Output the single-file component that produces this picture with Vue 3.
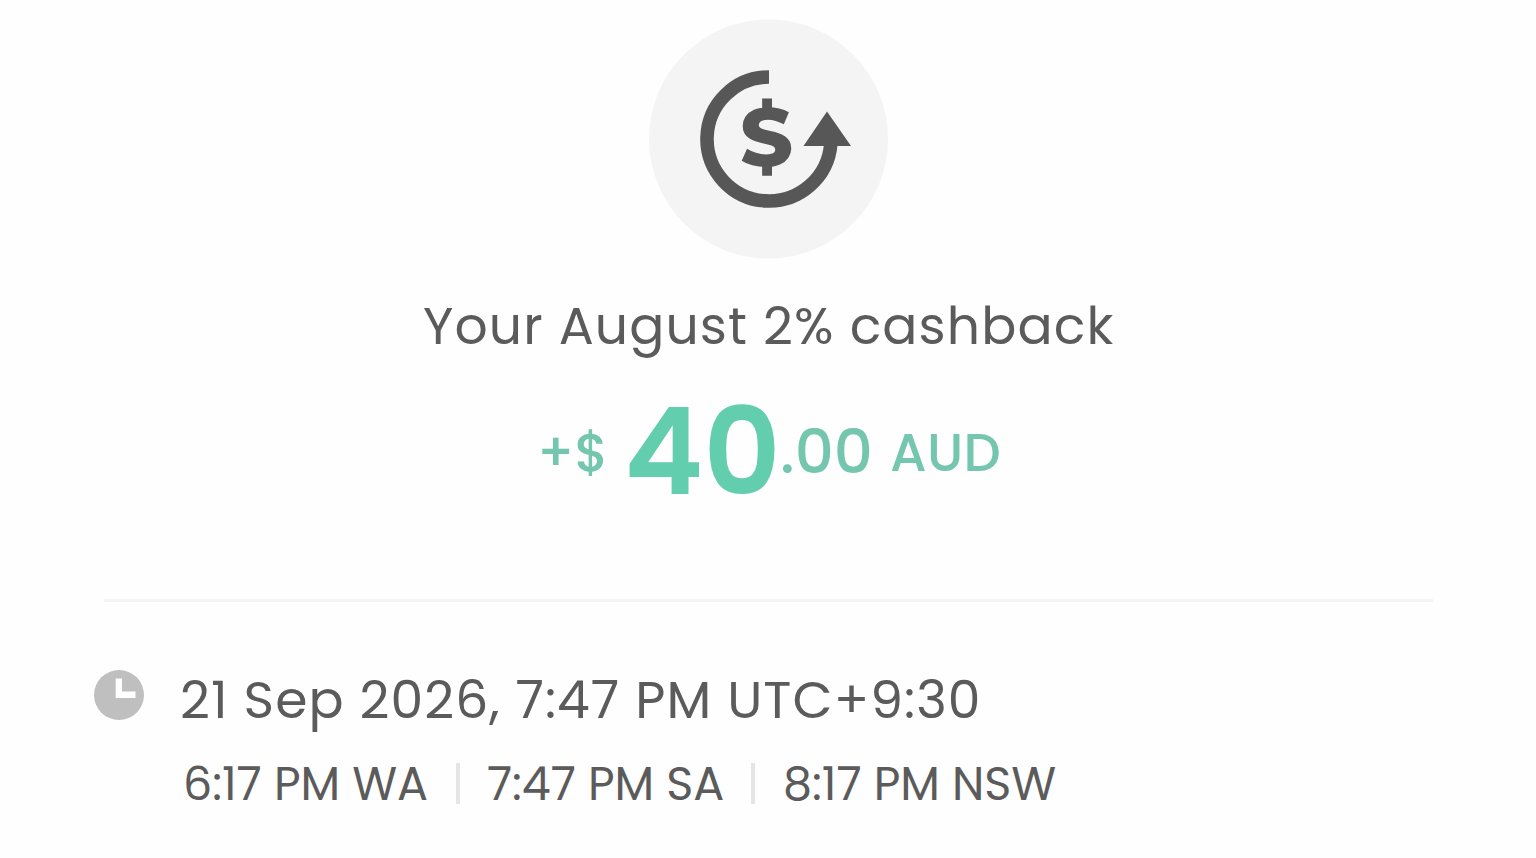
<template>
  <main class="receipt">
    <div class="receipt-icon">
      <svg viewBox="0 0 240 240" width="240" height="240">
        <circle cx="119.500" cy="120" r="119.500" fill="#f4f4f4" />
        <path d="M120 58A62 62 0 1 0 181.800 125" fill="none" stroke="#575757" stroke-width="13.600" />
        <path d="M178 92.500L202 127H154.500Z" fill="#575757" />
        <text class="icon-currency" x="117.500" y="147" text-anchor="middle">$</text>
      </svg>
    </div>

    <h1 class="receipt-title">Your August 2% cashback</h1>

    <div class="amount">
      <span class="amount-sign">+$</span>
      <span class="amount-whole">40</span>
      <span class="amount-cents">.00</span>
      <span class="amount-currency">AUD</span>
    </div>

    <hr class="divider" />

    <section class="time">
      <svg class="time-icon" viewBox="0 0 50 50" width="50" height="50">
        <circle cx="25" cy="25" r="25" fill="#bfbfbf" />
        <path d="M21.700 8.500h6.300v13h13.500v6.500h-19.800z" fill="#fff" />
      </svg>
      <div class="time-body">
        <div class="time-main">21 Sep 2026, 7:47 PM UTC+9:30</div>
        <div class="zones">
          <span v-for="zone in zones" :key="zone.name" class="zone" :class="zone.name">
            {{ zone.time }} {{ zone.label }}
          </span>
        </div>
      </div>
    </section>
  </main>
</template>

<script setup>
const zones = [
  { name: 'wa', time: '6:17 PM', label: 'WA' },
  { name: 'sa', time: '7:47 PM', label: 'SA' },
  { name: 'nsw', time: '8:17 PM', label: 'NSW' },
]
</script>

<style>
body {
  margin: 0;
  background: #fefefe;
}
</style>

<style scoped>
.receipt {
  box-sizing: border-box;
  width: 1536px;
  height: 858px;
  padding-top: 19px;
  overflow: hidden;
  font-family: Poppins, Inter, 'Liberation Sans', sans-serif;
  color: #5b5b5b;
  white-space: nowrap;
}

.receipt-icon {
  display: flex;
  justify-content: center;
  height: 240px;
  padding-left: 1px;
}

.icon-currency {
  font-family: Montserrat, 'Open Sans', sans-serif;
  font-size: 82px;
  font-weight: 800;
  fill: #575757;
}

.receipt-title {
  margin: 37px 0 0 423px;
  font-size: 52px;
  font-weight: 400;
  line-height: 60px;
  height: 60px;
  letter-spacing: 1.1px;
}

.amount {
  display: flex;
  align-items: flex-start;
  height: 140px;
  margin: 26px 0 0 537px;
  color: #74c6ae;
  font-weight: 500;
}

.amount-sign {
  width: 87px;
  padding-top: 41px;
  font-size: 52.5px;
  line-height: 60px;
}

.amount-whole {
  width: 156px;
  font-size: 120px;
  font-weight: 600;
  line-height: 140px;
  color: #63ceae;
}

.amount-cents {
  width: 110px;
  padding-top: 34px;
  font-size: 61px;
  line-height: 72px;
}

.amount-currency {
  padding-top: 41px;
  font-size: 52.5px;
  line-height: 60px;
  letter-spacing: 0.3px;
}

.divider {
  width: 1329px;
  height: 3px;
  margin: 77px 0 0 104px;
  border: none;
  background: #f4f4f4;
}

.time {
  display: flex;
  padding: 68px 0 0 94px;
}

.time-icon {
  flex: none;
}

.time-body {
  margin-left: 36px;
}

.time-main {
  font-size: 52px;
  font-weight: 400;
  line-height: 60px;
  letter-spacing: 1.05px;
}

.zones {
  display: flex;
  align-items: center;
  height: 41px;
  margin: 33px 0 0 3px;
  font-size: 46px;
  font-weight: 400;
  line-height: 42px;
  letter-spacing: -0.05px;
}

.zone {
  box-sizing: border-box;
  height: 41px;
}

.wa {
  width: 277px;
  border-right: 4px solid #e5e5e5;
}

.sa {
  width: 295px;
  padding-left: 27px;
  border-right: 4px solid #e5e5e5;
}

.nsw {
  padding-left: 28px;
}
</style>
